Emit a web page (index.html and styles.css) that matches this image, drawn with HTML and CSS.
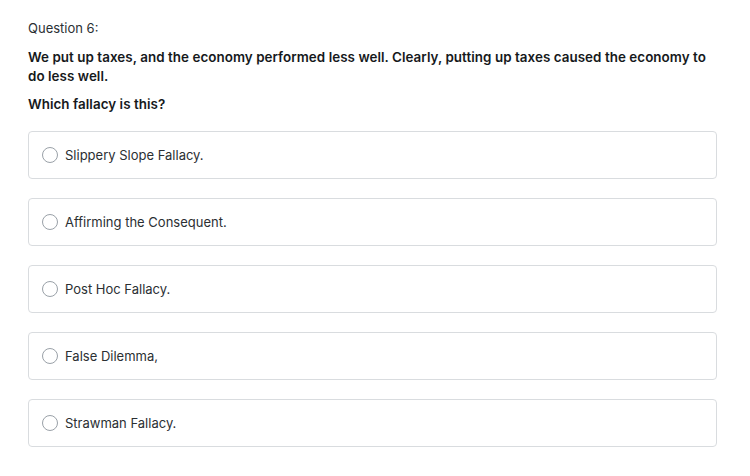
FILE: index.html
```html
<!DOCTYPE html>
<html>
<head>
<meta charset="utf-8">
<link rel="stylesheet" href="styles.css">
</head>
<body>
<div class="quiz">
  <p class="qnum">Question 6:</p>
  <p class="prompt">We put up taxes, and the economy performed less well. Clearly, putting up taxes caused the economy to do less well.</p>
  <p class="ask">Which fallacy is this?</p>
  <div class="options">
    <label class="option"><span class="radio"></span><span>Slippery Slope Fallacy.</span></label>
    <label class="option"><span class="radio"></span><span>Affirming the Consequent.</span></label>
    <label class="option"><span class="radio"></span><span>Post Hoc Fallacy.</span></label>
    <label class="option"><span class="radio"></span><span>False Dilemma,</span></label>
    <label class="option"><span class="radio"></span><span>Strawman Fallacy.</span></label>
  </div>
</div>
</body>
</html>
```
FILE: styles.css
```css
html, body { margin: 0; padding: 0; background: #fff; }
body { font-family: Inter, "Noto Sans", sans-serif; color: #1f2328; }
.quiz { padding: 18px 33px 0 28px; }
.qnum { margin: 0; font-size: 13px; line-height: 20px; color: #2b2f33; }
.prompt { margin: 10px 0 0; font-size: 13.4px; font-weight: 600; line-height: 19px; letter-spacing: 0.05px; color: #16191c; }
.ask { margin: 8px 0 0; font-size: 13.4px; font-weight: 600; line-height: 20px; letter-spacing: 0.05px; color: #16191c; }
.options { display: flex; flex-direction: column; gap: 19px; margin-top: 17px; }
.option { display: flex; align-items: center; gap: 7px; height: 46px; padding: 0 13px; border: 1px solid #d9dcdf; border-radius: 4px; font-size: 13px; color: #2b2f33; }
.radio { width: 14px; height: 14px; border: 1px solid #9aa1a8; border-radius: 50%; box-sizing: content-box; }
```
